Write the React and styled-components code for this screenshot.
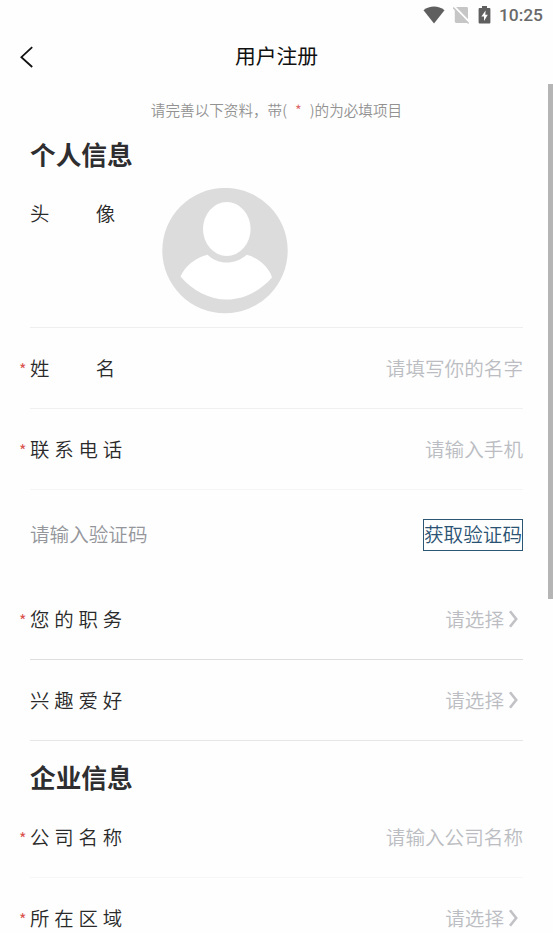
import React from 'react';
import styled, { createGlobalStyle } from 'styled-components';

const infoRows = [
  { label: '姓名', spread: true, required: true, placeholder: '请填写你的名字', line: '#f0f0f0' },
  { label: '联系电话', required: true, placeholder: '请输入手机', line: '#f5f5f5' },
];

const choiceRows = [
  { label: '您的职务', required: true, placeholder: '请选择', select: true, line: '#dedede' },
  { label: '兴趣爱好', placeholder: '请选择', select: true, line: '#e6e6e6' },
];

const companyRows = [
  { label: '公司名称', required: true, placeholder: '请输入公司名称', line: '#f7f7f7' },
  { label: '所在区域', required: true, placeholder: '请选择', select: true, line: '#f0f0f0' },
];

const StatusBar = () => (
  <Status>
    <svg width="22" height="18" viewBox="0 0 22 18">
      <path d="M0.5 4.2C6.5-0.6 15.5-0.6 21.5 4.2L11 17.6Z" fill="#5f5f5f" />
    </svg>
    <svg width="17" height="18" viewBox="0 0 17 18">
      <path d="M6.2 1H13.6Q15 1 15 2.4V17H3.2Q1.8 17 1.8 15.6V2.4Q1.8 1 3.2 1Z" fill="#c6c6c6" />
      <path d="M0.6 0L16.6 16.4" stroke="#fefefe" strokeWidth="2.2" />
      <path d="M0.2 1.6L15.6 17.4" stroke="#c6c6c6" strokeWidth="1.5" />
    </svg>
    <svg width="13" height="18" viewBox="0 0 13 18">
      <path d="M4 0H9V2H11.4Q12.4 2 12.4 3V16.6Q12.4 17.6 11.4 17.6H1.6Q0.6 17.6 0.6 16.6V3Q0.6 2 1.6 2H4Z" fill="#5f5f5f" />
      <path d="M7.6 4.4L3.4 10.6H6V15L9.8 8.8H7.3Z" fill="#fff" />
    </svg>
    <Clock>10:25</Clock>
  </Status>
);

const Avatar = () => (
  <svg width="126" height="126" viewBox="0 0 126 126">
    <circle cx="63" cy="62.6" r="62.7" fill="#dcdcdc" />
    <ellipse cx="64.8" cy="41" rx="23.8" ry="27" fill="#fff" />
    <path
      d="M45.5 66.8C51 72 57.5 74.6 64.6 74.6C72 74.6 79 71.8 84.8 66.8C96 69.8 107 79 110 89.5C97 104 81 111.6 64.5 111.6C48 111.6 31 103 18.5 88.5C23.5 77.5 34 69.5 45.5 66.8Z"
      fill="#fff"
    />
  </svg>
);

const FormRow = ({ label, required, placeholder, select, spread, line }) => (
  <Row $line={line}>
    <Label $spread={spread}>
      {required && <Star>*</Star>}
      {label}
    </Label>
    <Placeholder>
      {placeholder}
      {select && (
        <svg width="19" height="20" viewBox="0 0 19 20">
          <path d="M6 3.2L12.2 11L6 18.8" fill="none" stroke="#c2c2c6" strokeWidth="2.6" />
        </svg>
      )}
    </Placeholder>
  </Row>
);

const App = () => {
  return (
    <Screen>
      <GlobalStyle />
      <StatusBar />
      <NavBar>
        <BackButton aria-label="返回">
          <svg width="14" height="22" viewBox="0 0 14 22">
            <path d="M12.2 1.2L1.4 11.2L12.2 21" fill="none" stroke="#111" strokeWidth="1.8" />
          </svg>
        </BackButton>
        <Title>用户注册</Title>
      </NavBar>
      <Content>
        <Hint>
          请完善以下资料，带(<HintStar>*</HintStar>)的为必填项目
        </Hint>
        <Heading>个人信息</Heading>
        <AvatarRow>
          <Label $spread>头像</Label>
          <Avatar />
        </AvatarRow>
        {infoRows.map((row) => <FormRow key={row.label} {...row} />)}
        <CodeRow>
          <CodeInput>请输入验证码</CodeInput>
          <CodeButton>获取验证码</CodeButton>
        </CodeRow>
        {choiceRows.map((row) => <FormRow key={row.label} {...row} />)}
        <Heading $second>企业信息</Heading>
        {companyRows.map((row) => <FormRow key={row.label} {...row} />)}
        <ScrollThumb />
      </Content>
    </Screen>
  );
};

const GlobalStyle = createGlobalStyle`
* {
  box-sizing: border-box;
}
body {
  margin: 0;
  background: #fff;
  overflow: hidden;
}
svg {
  display: block;
  flex: none;
}
`;

const Screen = styled.div`
width: 100%;
height: 933px;
overflow: hidden;
display: flex;
flex-direction: column;
background: #fefefe;
color: #333;
font-family: "Noto Sans CJK SC", sans-serif;
font-weight: 350;
`;

const Status = styled.div`
display: flex;
justify-content: flex-end;
align-items: center;
gap: 8px;
height: 30px;
padding-right: 10px;
flex: none;
`;

const Clock = styled.span`
font: 500 17.4px/30px Roboto, sans-serif;
color: #6a6a6a;
`;

const NavBar = styled.div`
display: grid;
grid-template-columns: 40px 1fr 40px;
align-items: center;
height: 54px;
padding: 0 14px;
flex: none;
`;

const BackButton = styled.button`
padding: 0 0 0 6px;
border: 0;
background: none;
`;

const Title = styled.h1`
margin: 0;
padding-bottom: 4px;
font-size: 20.8px;
line-height: 50px;
font-weight: 400;
text-align: center;
color: #111;
`;

const Content = styled.div`
position: relative;
flex: 1;
padding: 0 30px;
overflow: hidden;
`;

const Hint = styled.p`
margin: 0;
height: 51px;
line-height: 51px;
font-size: 14.6px;
text-align: center;
color: #929292;
white-space: nowrap;
`;

const HintStar = styled.span`
color: #d66;
margin: 0 8px;
`;

const Heading = styled.h2`
margin: 0;
height: ${({ $second }) => ($second ? '56px' : '53px')};
padding-top: ${({ $second }) => ($second ? '17px' : '0')};
line-height: 38px;
font-size: 25.7px;
font-weight: 700;
color: #2e2e30;
`;

const AvatarRow = styled.div`
display: grid;
grid-template-columns: 132px auto;
justify-content: start;
height: 140px;
border-bottom: 1px solid #eee;
line-height: 49px;
`;

const Row = styled.div`
display: flex;
justify-content: space-between;
align-items: center;
height: 81px;
padding-bottom: 2px;
border-bottom: 1px solid ${({ $line }) => $line};
`;

const Label = styled.span`
position: relative;
font-size: 19.4px;
letter-spacing: ${({ $spread }) => ($spread ? '46.3px' : '4.9px')};
color: #2a2a2a;
`;

const Star = styled.span`
position: absolute;
left: -11px;
top: 4px;
font-size: 16px;
font-weight: 400;
letter-spacing: 0;
color: #d9534f;
`;

const Placeholder = styled.span`
display: flex;
align-items: center;
font-size: 19.6px;
color: #bbbdc2;
`;

const CodeRow = styled.div`
display: flex;
justify-content: space-between;
align-items: center;
height: 89px;
`;

const CodeInput = styled.span`
padding-bottom: 2px;
font-size: 19.6px;
color: #94969b;
`;

const CodeButton = styled.button`
height: 32px;
padding: 0 0 2px;
border: 1px solid #2d5675;
border-radius: 0;
background: none;
font: 350 19.6px/28px "Noto Sans CJK SC", sans-serif;
color: #2a5272;
`;

const ScrollThumb = styled.div`
position: absolute;
top: 0;
right: 0;
width: 5px;
height: 515px;
background: #b5b5b5;
`;

export default App;
